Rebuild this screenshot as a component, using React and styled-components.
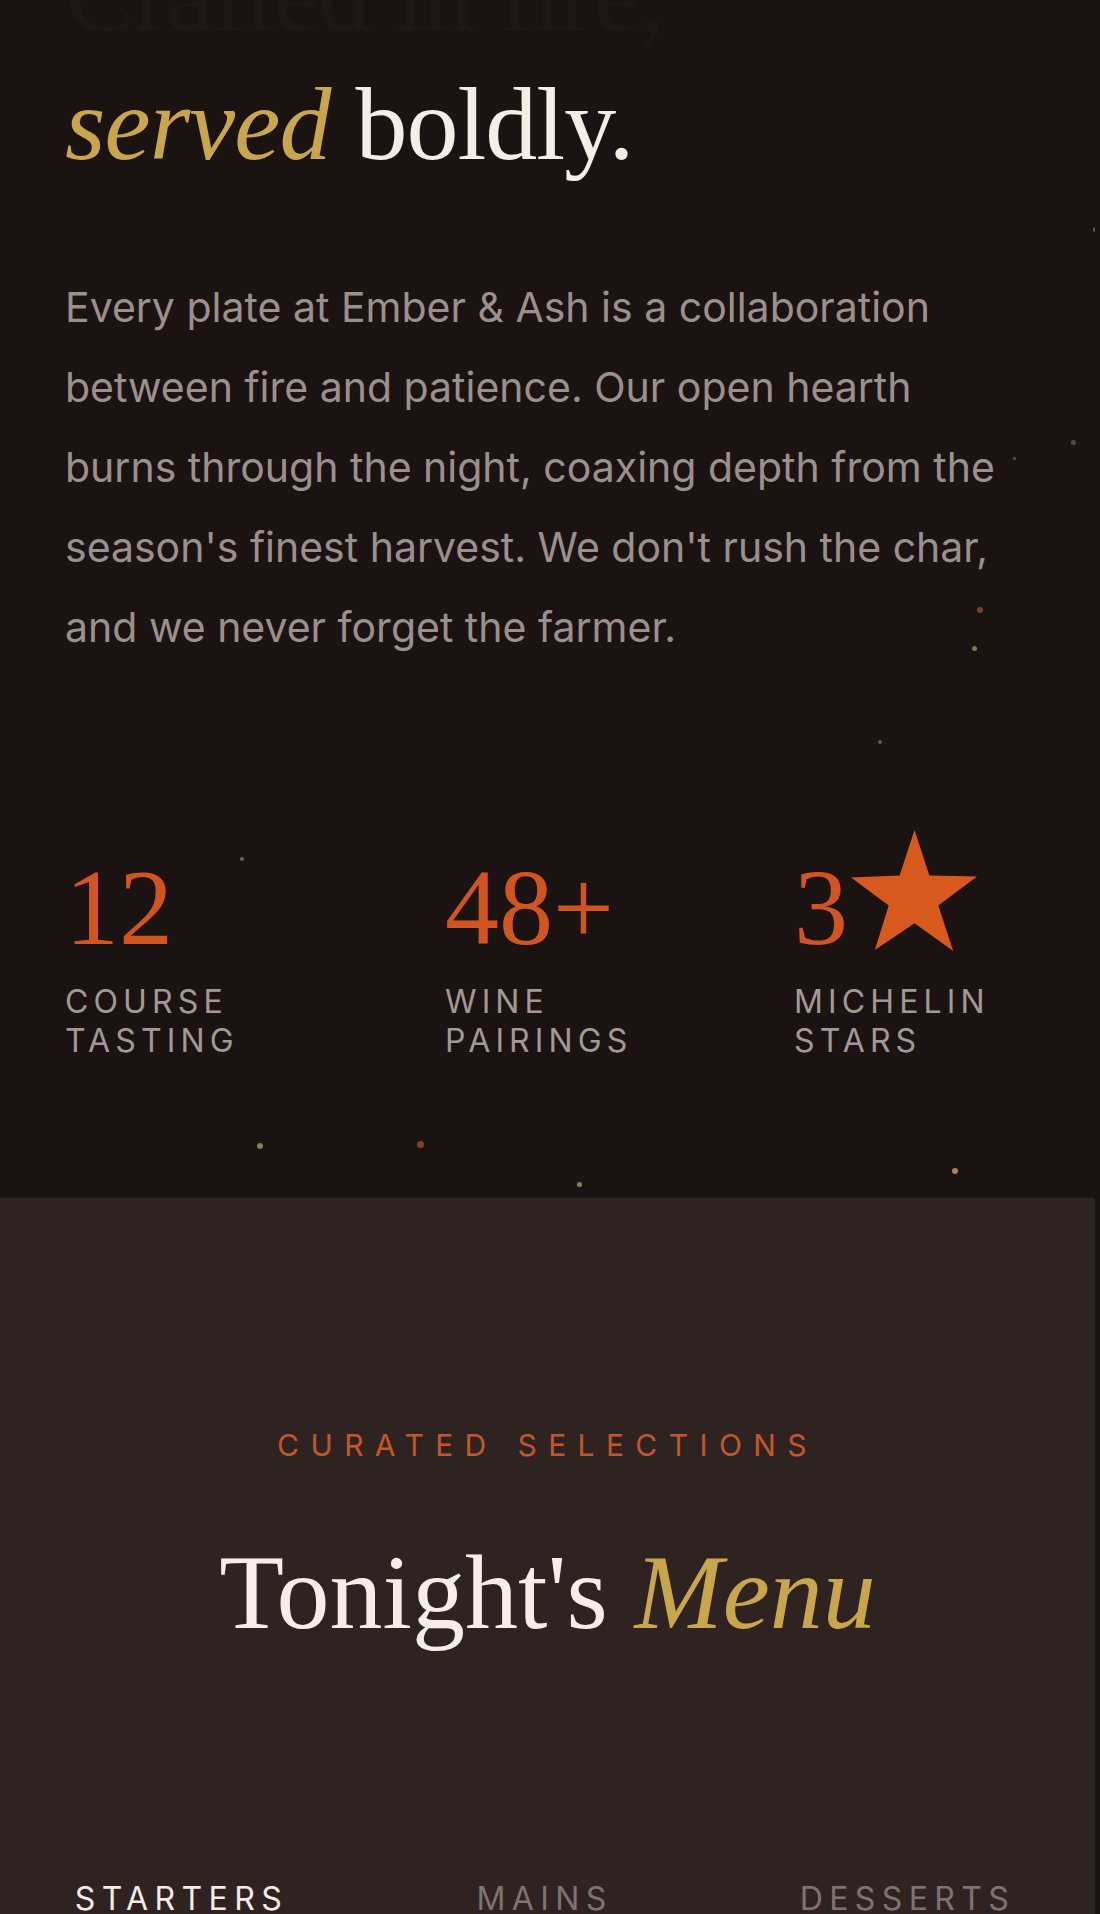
import React from "react";
import styled, { createGlobalStyle } from "styled-components";

const GlobalStyle = createGlobalStyle`
  html, body { margin: 0; padding: 0; background: #1b1311; }
  * { box-sizing: border-box; }
`;

const Page = styled.div`
  width: 1095px;
  background: #1b1311;
`;

const StorySection = styled.section`
  position: relative;
  overflow: hidden;
  background: #1b1311;
  padding: 0 65px 138px;
`;

const Heading = styled.h1`
  margin: -70px 0 0;
  font-family: "Liberation Serif", "DejaVu Serif", serif;
  font-weight: 400;
  font-size: 104px;
  line-height: 129px;
  letter-spacing: -1px;
  color: #f6eee6;
`;

const HeadLine = styled.span`
  display: block;
  color: ${(p) => (p.$dim ? "#201715" : "#f6eee6")};
`;

const Accent = styled.em`
  font-style: italic;
  color: ${(p) => p.$color || "#c9a54b"};
`;

const Lead = styled.p`
  margin: 79px 0 0;
  font-family: Inter, "Liberation Sans", sans-serif;
  font-size: 41px;
  line-height: 80px;
  color: #9b908b;
`;

const Stats = styled.div`
  display: grid;
  grid-template-columns: 380px 349px 1fr;
  align-items: end;
  margin-top: 163px;
`;

const Stat = styled.div`
  display: flex;
  flex-direction: column;
`;

const NumberRow = styled.div`
  display: flex;
  align-items: flex-end;
`;

const Figure = styled.span`
  font-family: "Liberation Serif", "DejaVu Serif", serif;
  font-size: 108px;
  line-height: 108px;
  color: #d2551f;
`;

const StarMark = styled.svg`
  width: 127px;
  height: 121px;
  margin: 0 0 11px 3px;
  flex: none;
`;

const StatLabel = styled.div`
  margin-top: 20px;
  font-family: Inter, "Liberation Sans", sans-serif;
  font-size: 32px;
  line-height: 39px;
  letter-spacing: 0.16em;
  text-transform: uppercase;
  color: #a39893;
`;

const Ember = styled.span`
  position: absolute;
  width: ${(p) => p.$s}px;
  height: ${(p) => p.$s}px;
  border-radius: 50%;
  background: ${(p) => p.$c};
  opacity: 0.85;
`;

const MenuSection = styled.section`
  background: #2f2322;
  padding: 229px 0 40px;
  text-align: center;
`;

const Eyebrow = styled.div`
  font-family: Inter, "Liberation Sans", sans-serif;
  font-size: 30px;
  line-height: 36px;
  letter-spacing: 0.38em;
  text-transform: uppercase;
  color: #c4562a;
`;

const MenuTitle = styled.h2`
  margin: 72px 0 0;
  font-family: "Liberation Serif", "DejaVu Serif", serif;
  font-weight: 400;
  font-size: 106px;
  line-height: 1.1;
  color: #f6eee6;
`;

const Tabs = styled.div`
  display: grid;
  grid-template-columns: repeat(3, 1fr);
  margin-top: 228px;
  width: 1089px;
`;

const Tab = styled.button`
  background: none;
  border: 0;
  padding: 0;
  font-family: Inter, "Liberation Sans", sans-serif;
  font-size: 32px;
  line-height: 38px;
  letter-spacing: 0.2em;
  text-transform: uppercase;
  color: ${(p) => (p.$active ? "#f3ebe4" : "#7e7370")};
  text-align: center;
  cursor: pointer;
`;

const embers = [
  { x: 1093, y: 227, s: 5, c: "#6e625d" },
  { x: 1071, y: 440, s: 5, c: "#5e524e" },
  { x: 1013, y: 457, s: 3, c: "#6e625d" },
  { x: 977, y: 607, s: 6, c: "#8a4a36" },
  { x: 972, y: 646, s: 5, c: "#9c8656" },
  { x: 878, y: 740, s: 4, c: "#6e625d" },
  { x: 240, y: 857, s: 4, c: "#7e7258" },
  { x: 257, y: 1143, s: 6, c: "#a58d55" },
  { x: 417, y: 1141, s: 7, c: "#8e4a35" },
  { x: 577, y: 1182, s: 5, c: "#a2915e" },
  { x: 952, y: 1168, s: 6, c: "#c69670" },
];

const stats = [
  { value: "12", label: ["Course", "Tasting"] },
  { value: "48+", label: ["Wine", "Pairings"] },
  { value: "3", star: true, label: ["Michelin", "Stars"] },
];

export default function App() {
  return (
    <Page>
      <GlobalStyle />
      <StorySection>
        <Heading>
          <HeadLine $dim>Crafted in fire,</HeadLine>
          <HeadLine>
            <Accent>served</Accent> boldly.
          </HeadLine>
        </Heading>
        <Lead>
          Every plate at Ember &amp; Ash is a collaboration between fire and
          patience. Our open hearth burns through the night, coaxing depth from
          the season's finest harvest. We don't rush the char, and we never
          forget the farmer.
        </Lead>
        <Stats>
          {stats.map((s) => (
            <Stat key={s.value}>
              <NumberRow>
                <Figure>{s.value}</Figure>
                {s.star && (
                  <StarMark viewBox="0 0 128 122" aria-hidden="true">
                    <polygon
                      points="64,0 79,46 127,47 88,76 103,122 64,94 24,121 38,76 0,48 49,46"
                      fill="#d8591d"
                    />
                  </StarMark>
                )}
              </NumberRow>
              <StatLabel>
                {s.label[0]}
                <br />
                {s.label[1]}
              </StatLabel>
            </Stat>
          ))}
        </Stats>
        {embers.map((e, i) => (
          <Ember
            key={i}
            $s={e.s}
            $c={e.c}
            style={{ left: e.x, top: e.y }}
          />
        ))}
      </StorySection>
      <MenuSection>
        <Eyebrow>Curated Selections</Eyebrow>
        <MenuTitle>
          Tonight's <Accent>Menu</Accent>
        </MenuTitle>
        <Tabs>
          <Tab $active>Starters</Tab>
          <Tab>Mains</Tab>
          <Tab>Desserts</Tab>
        </Tabs>
      </MenuSection>
    </Page>
  );
}
